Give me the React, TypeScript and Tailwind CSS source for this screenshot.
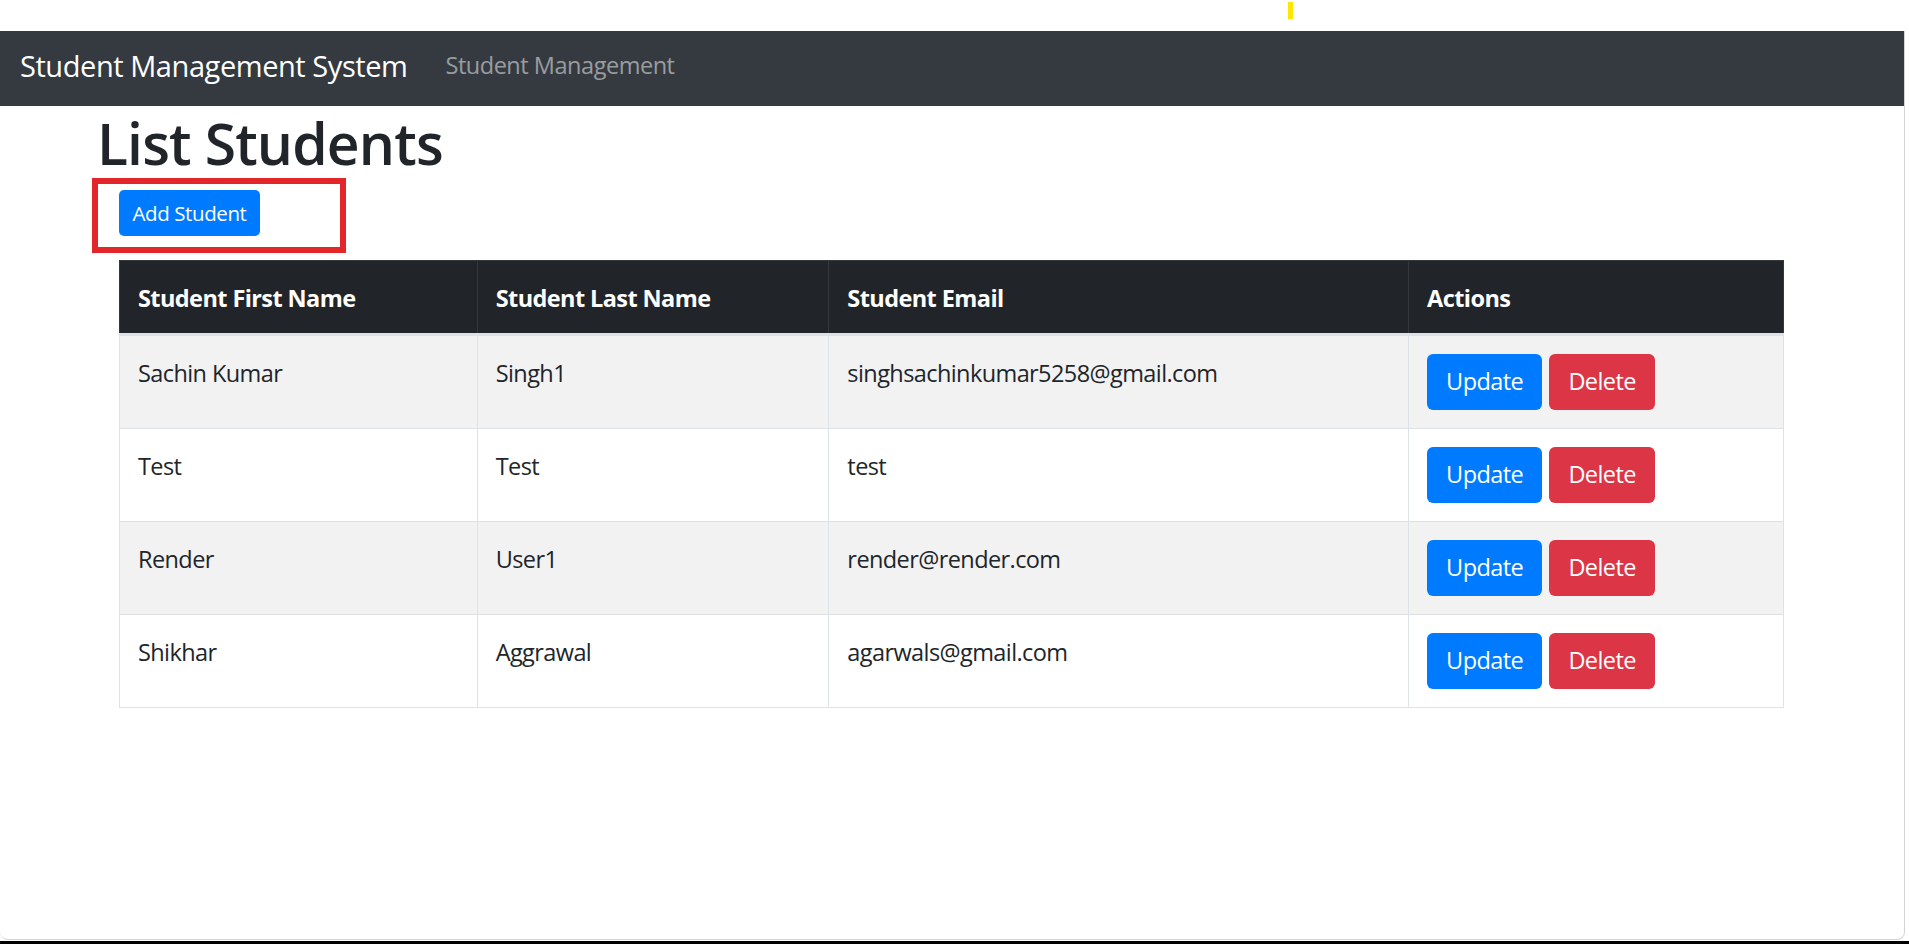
import React from 'react';

interface Student {
  firstName: string;
  lastName: string;
  email: string;
}

const students: Student[] = [
  { firstName: 'Sachin Kumar', lastName: 'Singh1', email: 'singhsachinkumar5258@gmail.com' },
  { firstName: 'Test', lastName: 'Test', email: 'test' },
  { firstName: 'Render', lastName: 'User1', email: 'render@render.com' },
  { firstName: 'Shikhar', lastName: 'Aggrawal', email: 'agarwals@gmail.com' },
];

const font = { fontFamily: '"Open Sans", "Noto Sans", Arial, sans-serif' };

const Navbar: React.FC = () => (
  <nav className="flex h-[75px] items-center bg-[#343a40] pl-[20px] pb-[6px]">
    <span className="text-[29px] leading-none tracking-[-0.015em] text-white">Student Management System</span>
    <span className="ml-[38px] text-[23.5px] leading-none tracking-[-0.02em] text-white/50">Student Management</span>
  </nav>
);

const StudentRow: React.FC<{ student: Student; striped: boolean }> = ({ student, striped }) => (
  <tr className={striped ? 'bg-[#f2f2f2]' : 'bg-white'}>
    <td className="border border-[#dee2e6] px-[18px] pt-[19px] pb-[17px] align-top leading-[36px]">{student.firstName}</td>
    <td className="border border-[#dee2e6] px-[18px] pt-[19px] pb-[17px] align-top leading-[36px]">{student.lastName}</td>
    <td className="border border-[#dee2e6] px-[18px] pt-[19px] pb-[17px] align-top leading-[36px]">{student.email}</td>
    <td className="border border-[#dee2e6] px-[18px] py-[18px] align-top">
      <div className="flex gap-[7px]">
        <button className="flex h-[56px] w-[115px] items-center justify-center rounded-[6px] bg-[#007bff] text-white">
          Update
        </button>
        <button className="flex h-[56px] w-[106px] items-center justify-center rounded-[6px] bg-[#dc3545] text-white">
          Delete
        </button>
      </div>
    </td>
  </tr>
);

export default function App() {
  return (
    <div className="h-[944px] w-full overflow-hidden bg-white text-[#212529]" style={font}>
      <div className="h-[31px] pt-[2px]">
        <div className="ml-[1288px] h-[17px] w-[5px] bg-[#ffe600]" />
      </div>

      <div className="h-[909px] w-[1905px] overflow-hidden rounded-b-[8px] border-r border-b border-[#d4d4d4]">
        <Navbar />

        <div className="pl-[97px]">
          <h1 className="mt-[2px] h-[70px] text-[57px] font-semibold leading-[70px] tracking-[-0.015em]">List Students</h1>

          <div className="-ml-[5px] h-[75px] w-[254px] border-[6px] border-[#e3262a] pl-[21px] pt-[6px]">
            <button className="flex h-[46px] w-[141px] items-center justify-center rounded-[5px] bg-[#007bff] text-[20.5px] tracking-[-0.02em] text-white">
              Add Student
            </button>
          </div>

          <table className="ml-[22px] mt-[7px] w-[1665px] border-collapse text-[23.5px] tracking-[-0.025em]">
            <thead>
              <tr className="bg-[#212529] text-white">
                <th className="w-[358px] border border-[#32383e] border-b-[3px] border-b-[#dee2e6] px-[18px] pt-[19px] pb-[17px] text-left font-bold leading-[36px]">
                  Student First Name
                </th>
                <th className="w-[352px] border border-[#32383e] border-b-[3px] border-b-[#dee2e6] px-[18px] pt-[19px] pb-[17px] text-left font-bold leading-[36px]">
                  Student Last Name
                </th>
                <th className="w-[580px] border border-[#32383e] border-b-[3px] border-b-[#dee2e6] px-[18px] pt-[19px] pb-[17px] text-left font-bold leading-[36px]">
                  Student Email
                </th>
                <th className="w-[375px] border border-[#32383e] border-b-[3px] border-b-[#dee2e6] px-[18px] pt-[19px] pb-[17px] text-left font-bold leading-[36px]">
                  Actions
                </th>
              </tr>
            </thead>
            <tbody>
              {students.map((s, i) => (
                <StudentRow key={i} student={s} striped={i % 2 === 0} />
              ))}
            </tbody>
          </table>
        </div>
      </div>

      <div className="mt-[1px] h-[3px] w-full bg-black" />
    </div>
  );
}
